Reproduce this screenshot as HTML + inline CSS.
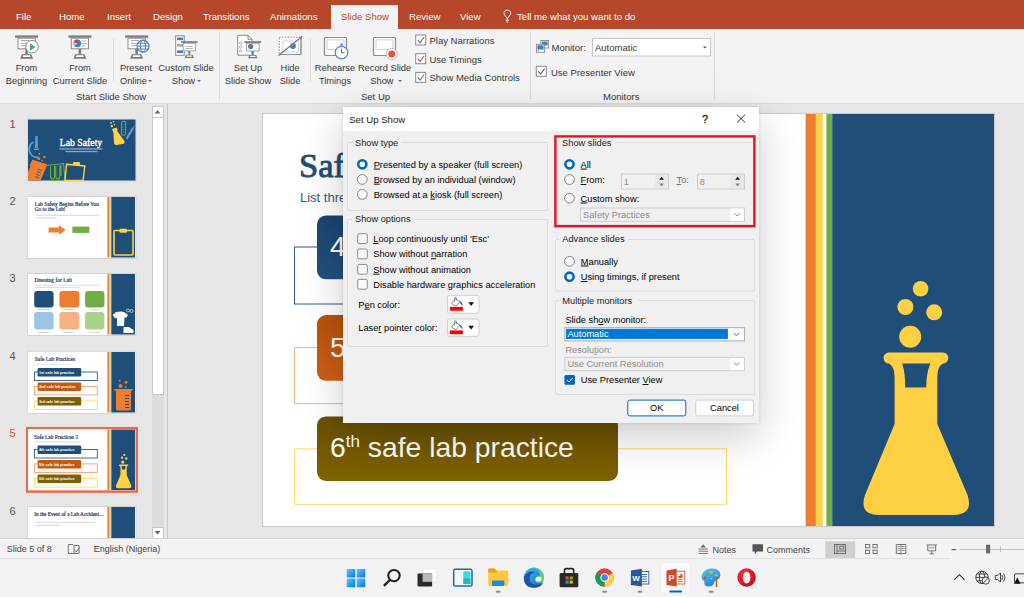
<!DOCTYPE html>
<html><head><meta charset="utf-8">
<style>
*{margin:0;padding:0;box-sizing:border-box}
html,body{width:1024px;height:597px;overflow:hidden}
body{position:relative;background:#E6E6E6;font-family:"Liberation Sans",sans-serif;color:#262626}
.a{position:absolute;white-space:nowrap}
#tabs{left:0;top:0;width:1024px;height:29px;background:#B7472A}
.tab{position:absolute;top:10.7px;font-size:9.6px;color:#fff;line-height:12px}
#ribbon{left:0;top:29px;width:1024px;height:75px;background:#F3F3F3;border-bottom:1px solid #DADADA}
.rl{position:absolute;font-size:9.3px;color:#363636;line-height:13px;text-align:center}
.sep{position:absolute;width:1px;background:#DADADA}
.gl{position:absolute;font-size:9.5px;color:#363636;line-height:12px}
.cb{position:absolute;width:11px;height:11px;border:1px solid #8A8A8A;background:#fff}
</style></head>
<body>
<!-- TABS -->
<div id="tabs" class="a">
  <div class="tab" style="left:16px">File</div>
  <div class="tab" style="left:59px">Home</div>
  <div class="tab" style="left:107px">Insert</div>
  <div class="tab" style="left:153px">Design</div>
  <div class="tab" style="left:203px">Transitions</div>
  <div class="tab" style="left:270px">Animations</div>
  <div class="a" style="left:331px;top:5px;width:67px;height:24px;background:#F3F3F3"></div>
  <div class="tab" style="left:341px;color:#B7472A">Slide Show</div>
  <div class="tab" style="left:409px">Review</div>
  <div class="tab" style="left:460px">View</div>
  <svg class="a" style="left:500px;top:8px" width="16" height="17" viewBox="500 8 16 17"><path d="M507.2,21 V19.2 Q507.2,18 506.2,17 Q503.5,14.8 504,12.6 Q504.6,10.2 507.3,10 Q510,10.2 510.6,12.6 Q511.1,14.8 508.4,17 Q507.4,18 507.4,19.2" fill="none" stroke="#fff" stroke-width="0.9"/><path d="M505.8,20.2 H508.8 M506.3,22 H508.3" stroke="#fff" stroke-width="0.9"/></svg>
  <div class="tab" style="left:517px">Tell me what you want to do</div>
</div>
<!-- RIBBON -->
<div id="ribbon" class="a"></div>
<!-- RIBBON CONTENT -->
<svg class="a" style="left:0;top:0" width="720" height="104" viewBox="0 0 720 104">
 <defs>
  <g id="proj">
   <rect x="0" y="0" width="23" height="2.3" fill="#7A7A7A"/>
   <rect x="2.9" y="2.8" width="17.2" height="10.6" fill="#fff" stroke="#8A8A8A" stroke-width="1"/>
   <rect x="10.2" y="13.5" width="2.6" height="5.5" fill="#7A7A7A"/>
   <path d="M5,23.4 L18,23.4 L16.2,18.8 L6.8,18.8 Z" fill="#7A7A7A"/>
   <path d="M7.5,21.6 L15.5,21.6 L14.8,19.8 L8.2,19.8 Z" fill="#fff"/>
  </g>
 </defs>
 <!-- From Beginning -->
 <use href="#proj" x="15.1" y="35.4"/>
 <rect x="21" y="40" width="8" height="1" fill="#AAA"/><rect x="21" y="42.8" width="8" height="1" fill="#AAA"/><rect x="21" y="45.2" width="5" height="1" fill="#AAA"/>
 <circle cx="32" cy="46.7" r="6.3" fill="#fff" stroke="#8A8A8A" stroke-width="1"/>
 <path d="M30,43.2 L35.6,47 L30,50.8 Z" fill="#5AA17A"/>
 <!-- From Current Slide -->
 <use href="#proj" x="68.4" y="35.4"/>
 <circle cx="77.3" cy="43.3" r="3.9" fill="#3C7FC5"/>
 <path d="M77.3,43.3 L77.3,39.4 A3.9,3.9 0 0 0 73.6,42.2 Z" fill="#D9472B"/>
 <path d="M77.3,43.3 L73.6,42.2 A3.9,3.9 0 0 0 74.6,46 Z" fill="#F4C582"/>
 <rect x="81.6" y="40.5" width="4.5" height="0.9" fill="#AAA"/><rect x="81.6" y="43" width="5.3" height="0.9" fill="#AAA"/><rect x="81.6" y="45.4" width="3.5" height="0.9" fill="#AAA"/>
 <!-- Present Online -->
 <use href="#proj" x="125.1" y="35.4"/>
 <rect x="131" y="40" width="8" height="1" fill="#AAA"/><rect x="131" y="42.8" width="8" height="1" fill="#AAA"/><rect x="131" y="45.2" width="5" height="1" fill="#AAA"/>
 <circle cx="143" cy="46.1" r="6" fill="#fff" stroke="#4A86C8" stroke-width="1.2"/>
 <ellipse cx="143" cy="46.1" rx="2.6" ry="6" fill="none" stroke="#4A86C8" stroke-width="1"/>
 <path d="M137,46.1 H149 M137.8,43.2 H148.2 M137.8,49 H148.2" stroke="#4A86C8" stroke-width="1"/>
 <!-- Custom Slide Show -->
 <rect x="175.7" y="35.8" width="8.5" height="19.5" fill="#fff" stroke="#8A8A8A" stroke-width="1"/>
 <rect x="177" y="37.6" width="6" height="2.6" fill="#3C7FC5"/>
 <rect x="177" y="44" width="6" height="2.6" fill="#A8A8A8"/>
 <rect x="177" y="50.4" width="6" height="2.6" fill="#3C7FC5"/>
 <g transform="translate(181,41.2) scale(0.72)"><use href="#proj"/></g>
 <rect x="185.5" y="46" width="7" height="0.8" fill="#AAA"/><rect x="185.5" y="48" width="7" height="0.8" fill="#AAA"/>
 <!-- separators -->
 <rect x="113" y="38" width="1" height="43" fill="#DADADA"/>
 <rect x="219" y="32.5" width="1" height="67" fill="#DADADA"/>
 <rect x="310" y="38" width="1" height="44" fill="#DADADA"/>
 <rect x="530" y="32.5" width="1" height="67" fill="#DADADA"/>
 <rect x="714" y="32.5" width="1" height="67" fill="#DADADA"/>
 <!-- Set Up Slide Show -->
 <path d="M237.7,35.3 H248 L252,39.3 V55.2 H237.7 Z" fill="#fff" stroke="#8A8A8A" stroke-width="1"/>
 <path d="M248,35.3 V39.3 H252" fill="none" stroke="#8A8A8A" stroke-width="1"/>
 <circle cx="240.6" cy="43" r="1.2" fill="none" stroke="#999" stroke-width="0.7"/><circle cx="240.6" cy="47" r="1.2" fill="none" stroke="#999" stroke-width="0.7"/><circle cx="240.6" cy="51" r="1.2" fill="none" stroke="#999" stroke-width="0.7"/>
 <g transform="translate(244.4,41.2) scale(0.73)"><use href="#proj"/></g>
 <circle cx="250.7" cy="46.6" r="2.6" fill="#3C7FC5"/><path d="M250.7,46.6 V44 A2.6,2.6 0 0 0 248.2,45.9 Z" fill="#D9472B"/>
 <!-- Hide Slide -->
 <rect x="279.3" y="37.3" width="21.7" height="17.2" fill="#fff" stroke="#8A8A8A" stroke-width="1" stroke-dasharray="1.4,1.4"/>
 <path d="M301,37.3 V54.5 H279.3" fill="none" stroke="#8A8A8A" stroke-width="1.2"/>
 <rect x="283" y="41" width="15.5" height="11" fill="none" stroke="#C8C8C8" stroke-width="0.8"/>
 <circle cx="292.9" cy="46" r="3" fill="#3C7FC5"/><path d="M292.9,46 V43 A3,3 0 0 0 290,45.5 Z" fill="#F0A030"/>
 <path d="M278.5,55.5 L302.3,36.2" stroke="#7A7A7A" stroke-width="1.3"/>
 <!-- Rehearse Timings -->
 <rect x="324.5" y="37.5" width="22" height="18" rx="1" fill="#fff" stroke="#8A8A8A" stroke-width="1.2"/>
 <rect x="327" y="39.8" width="17" height="9.8" rx="1" fill="#fff" stroke="#CFCFCF" stroke-width="1"/>
 <rect x="340.3" y="43.5" width="2.4" height="2.2" fill="#777"/>
 <circle cx="341.5" cy="52.6" r="6.3" fill="#fff" stroke="#4A8ADA" stroke-width="1.3"/>
 <path d="M341.5,48.8 V52.8 H344.5" fill="none" stroke="#555" stroke-width="0.9"/>
 <!-- Record Slide Show -->
 <rect x="373.5" y="37.5" width="22" height="18" rx="1" fill="#fff" stroke="#8A8A8A" stroke-width="1.2"/>
 <rect x="376" y="39.8" width="17" height="9.8" rx="1" fill="#fff" stroke="#CFCFCF" stroke-width="1"/>
 <circle cx="391.7" cy="53.9" r="5.6" fill="#fff" stroke="#BDBDBD" stroke-width="1"/>
 <circle cx="391.7" cy="53.9" r="3.5" fill="#E0583A"/>
 <!-- checkboxes -->
 <g fill="#fff" stroke="#8A8A8A" stroke-width="1">
  <rect x="415.7" y="35" width="10" height="10"/>
  <rect x="415.7" y="53.7" width="10" height="10"/>
  <rect x="415.7" y="72.4" width="10" height="10"/>
  <rect x="536.3" y="66.3" width="10" height="10"/>
 </g>
 <g fill="none" stroke="#6A6A6A" stroke-width="1.1">
  <path d="M417.8,40 L420,42.8 L424,37.3"/>
  <path d="M417.8,58.7 L420,61.5 L424,56"/>
  <path d="M417.8,77.4 L420,80.2 L424,74.7"/>
  <path d="M538.4,71.3 L540.6,74.1 L544.6,68.6"/>
 </g>
 <!-- monitor icon -->
 <rect x="540.8" y="40.5" width="7.8" height="7.5" fill="#fff" stroke="#8A8A8A" stroke-width="0.9"/>
 <rect x="541.8" y="41.5" width="5.8" height="4" fill="#3C7FC5"/>
 <rect x="536.4" y="44.3" width="8.2" height="8" fill="#fff" stroke="#8A8A8A" stroke-width="0.9"/>
 <rect x="537.4" y="45.3" width="6.2" height="4.2" fill="#3C7FC5"/>
 <rect x="537.6" y="50.3" width="1.5" height="0.8" fill="#E05A3A"/>
 <!-- dropdown -->
 <rect x="592.5" y="38.5" width="118" height="17.5" fill="#fff" stroke="#C6C6C6" stroke-width="1"/>
 <path d="M702.8,46.5 L706.8,46.5 L704.8,48.6 Z" fill="#555"/>
 <!-- dropdown arrows under labels -->
 <path d="M148,80 L152,80 L150,82 Z" fill="#666"/>
 <path d="M197,80 L201,80 L199,82 Z" fill="#666"/>
 <path d="M398,80 L402,80 L400,82 Z" fill="#666"/>
</svg>
<div class="rl" style="left:0;width:53px;top:62px">From<br>Beginning</div>
<div class="rl" style="left:50px;width:60px;top:62px">From<br>Current Slide</div>
<div class="rl" style="left:116px;width:40px;top:62px">Present<br>Online&nbsp;&nbsp;</div>
<div class="rl" style="left:156px;width:60px;top:62px">Custom Slide<br>Show&nbsp;&nbsp;</div>
<div class="gl" style="left:76px;top:91px">Start Slide Show</div>
<div class="rl" style="left:222px;width:52px;top:62px">Set Up<br>Slide Show</div>
<div class="rl" style="left:274px;width:32px;top:62px">Hide<br>Slide</div>
<div class="rl" style="left:313px;width:44px;top:62px">Rehearse<br>Timings</div>
<div class="rl" style="left:357px;width:55px;top:62px">Record Slide<br>Show&nbsp;&nbsp;</div>
<div class="gl" style="left:361px;top:91px">Set Up</div>
<div class="gl" style="left:429.5px;top:35px">Play Narrations</div>
<div class="gl" style="left:429.5px;top:53.7px">Use Timings</div>
<div class="gl" style="left:429.5px;top:72.4px">Show Media Controls</div>
<div class="gl" style="left:551.5px;top:42px">Monitor:</div>
<div class="gl" style="left:595px;top:42px">Automatic</div>
<div class="gl" style="left:551px;top:66.8px">Use Presenter View</div>
<div class="gl" style="left:603px;top:91px">Monitors</div>


<!-- THUMBNAIL PANEL -->
<div class="a" style="left:167px;top:104px;width:1px;height:434px;background:#C8C8C8"></div>
<div class="a" style="left:152px;top:106px;width:11.5px;height:432px;background:#DCDCDC"></div>
<div class="a" style="left:151.5px;top:105.5px;width:12px;height:12px;background:#fff;border:1px solid #C6C6C6"></div>
<div class="a" style="left:151.5px;top:117px;width:12px;height:278px;background:#fff;border:1px solid #C6C6C6"></div>
<div class="a" style="left:151.5px;top:527px;width:12px;height:12px;background:#fff;border:1px solid #C6C6C6"></div>
<svg class="a" style="left:0;top:0" width="170" height="540" viewBox="0 0 170 540">
 <path d="M154.5,113.5 L160.5,113.5 L157.5,110 Z" fill="#666"/>
 <path d="M154.5,531 L160.5,531 L157.5,534.5 Z" fill="#666"/>
 <g font-family="Liberation Sans" font-size="11" fill="#555">
  <text x="9.5" y="128">1</text><text x="9.5" y="205">2</text><text x="9.5" y="282">3</text>
  <text x="9.5" y="359.5">4</text><text x="9.5" y="437" fill="#D35230">5</text><text x="9.5" y="514.5">6</text>
 </g>
 <defs>
  <g id="rp">
   <rect x="0" y="0" width="107" height="60.5" fill="#fff"/>
   <rect x="79.4" y="0" width="1.6" height="60.5" fill="#ED7D31"/>
   <rect x="81" y="0" width="1.1" height="60.5" fill="#FFD24A"/>
   <rect x="82.6" y="0" width="0.8" height="60.5" fill="#70AD47"/>
   <rect x="83.4" y="0" width="23.6" height="60.5" fill="#1F4E79"/>
  </g>
  <g id="rows">
   <rect x="6.5" y="20" width="62.8" height="8.5" fill="none" stroke="#2E5C8A" stroke-width="0.9"/>
   <rect x="9.6" y="16" width="43.6" height="8.4" rx="1.2" fill="#1F4E79"/>
   <rect x="6.5" y="34.4" width="62.8" height="8.5" fill="none" stroke="#F0A070" stroke-width="0.9"/>
   <rect x="9.6" y="30.5" width="43.6" height="8.5" rx="1.2" fill="#C55A11"/>
   <rect x="6.5" y="49" width="62.8" height="8.6" fill="none" stroke="#FFD966" stroke-width="0.9"/>
   <rect x="9.6" y="45.1" width="43.6" height="8.5" rx="1.2" fill="#7F6000"/>
  </g>
 </defs>
 <!-- thumb 1 -->
 <rect x="28" y="119" width="108" height="62" fill="#fff" stroke="#D2D2D2" stroke-width="1"/>
 <g transform="translate(28,119.5)">
  <rect x="0" y="0" width="107.5" height="61" fill="#1F4E79"/>
  <text x="53" y="26.6" font-family="Liberation Serif" font-size="9.75" fill="#fff" stroke="#fff" stroke-width="0.35" text-anchor="middle">Lab Safety</text>
  <rect x="31.5" y="29" width="43" height="0.9" fill="#C5D3E8"/>
  <rect x="37.5" y="31.4" width="32" height="1.3" fill="#A9BEDD" opacity="0.8"/>
  <!-- microscope -->
  <path d="M7.2,16.5 L9.6,16.5 L10,28.5 L6.8,28.5 Z" fill="#5B9BD5"/>
  <path d="M6,29 H11 V30.5 H6 Z" fill="#5B9BD5"/>
  <path d="M5.5,22.5 C1,24.5 0,31 3,35 C5,37.5 8,38 10.5,38" fill="none" stroke="#5B9BD5" stroke-width="1.8"/>
  <!-- orange beaker -->
  <path d="M4.5,40 L19.3,45 L12.6,61 L0,61 L0,52.5 L2.5,47 L1.5,46 Z" fill="#ED7D31"/>
  <g stroke="#1F4E79" stroke-width="0.8"><path d="M9.5,49.5 L13.5,51 M8.7,52 L12.7,53.5 M7.9,54.5 L11.9,56 M7.1,57 L11.1,58.5"/></g>
  <circle cx="10.8" cy="39" r="1.5" fill="#ED7D31"/><circle cx="16.3" cy="37.5" r="1.2" fill="#ED7D31"/><circle cx="11.3" cy="34.3" r="0.9" fill="#ED7D31"/><circle cx="14.1" cy="41" r="0.8" fill="#ED7D31"/>
  <!-- test tubes -->
  <g fill="none" stroke="#70AD47" stroke-width="1.1">
   <path d="M19,46 L35.5,44 L37,60.5 L21,61"/>
   <path d="M22.5,47 V57 Q22.5,59.5 24.5,59.5 Q26.5,59.5 26.5,57 V46.5 M27.8,46.2 V57 Q27.8,59.3 29.8,59.3 Q31.8,59.3 31.8,57 V45.8 M33,45.7 V56.5"/>
  </g>
  <!-- clipboard -->
  <path d="M38.5,44.8 L56.8,46.5 L55,61 L37,61 Z" fill="none" stroke="#FFD24A" stroke-width="1.4"/>
  <rect x="45" y="42.5" width="7" height="3.2" rx="1.2" fill="#FFD24A"/>
  <!-- flask top right -->
  <path d="M84,9.5 L89,8 L89.5,12 L96.5,21.5 Q97,24 94.5,24.5 L88.5,25.5 Q86,25.5 86,23 L85.5,13.5 Z" fill="#FFD24A"/>
  <circle cx="83" cy="3.5" r="0.9" fill="#FFD24A"/><circle cx="85.5" cy="2.2" r="0.8" fill="#FFD24A"/><circle cx="83.8" cy="6.6" r="1.2" fill="#FFD24A"/><circle cx="86.5" cy="5.2" r="0.7" fill="#FFD24A"/>
  <rect x="93.6" y="2" width="4" height="13.6" rx="0.5" fill="none" stroke="#70AD47" stroke-width="1"/>
  <g stroke="#70AD47" stroke-width="0.5"><path d="M94.4,5 H96 M94.4,7.5 H96 M94.4,10 H96 M94.4,12.5 H96"/></g>
  <path d="M98.5,19.5 L105,8.5" stroke="#5B9BD5" stroke-width="2.2"/>
  <path d="M105,8.5 L106.5,6" stroke="#5B9BD5" stroke-width="1"/>
 </g>
 <!-- thumb 2 -->
 <rect x="28" y="196.5" width="108" height="62" fill="#fff" stroke="#D2D2D2" stroke-width="1"/>
 <g transform="translate(28,197)">
  <use href="#rp"/>
  <text x="6.8" y="8.6" font-family="Liberation Serif" font-size="5.25" fill="#1F3864" stroke="#1F3864" stroke-width="0.2">Lab Safety Begins Before You</text>
  <text x="6.8" y="14.1" font-family="Liberation Serif" font-size="5.25" fill="#1F3864" stroke="#1F3864" stroke-width="0.2">Go to the Lab!</text>
  <rect x="7.5" y="17.8" width="64" height="0.7" fill="#BCC4D0"/><rect x="8.5" y="20.6" width="21" height="0.7" fill="#BCC4D0"/>
  <path d="M20.6,30.5 H31 V28.2 L37.7,33 L31,37.7 V35.4 H20.6 Z" fill="#ED7D31"/>
  <rect x="44.4" y="29.6" width="16.9" height="6.3" fill="#70AD47"/>
  <rect x="86" y="33.5" width="19" height="24.5" rx="1" fill="none" stroke="#FFD24A" stroke-width="1.6"/>
  <rect x="91.5" y="31.8" width="7.5" height="4" rx="1.2" fill="#FFD24A"/>
 </g>
 <!-- thumb 3 -->
 <rect x="28" y="273.5" width="108" height="62" fill="#fff" stroke="#D2D2D2" stroke-width="1"/>
 <g transform="translate(28,274)">
  <use href="#rp"/>
  <text x="6.5" y="7.8" font-family="Liberation Serif" font-size="5.5" fill="#1F3864" stroke="#1F3864" stroke-width="0.2">Dressing for Lab</text>
  <rect x="6.5" y="10.8" width="66" height="0.7" fill="#CCD0D8"/><rect x="6.5" y="13" width="45" height="0.7" fill="#CCD0D8"/>
  <rect x="6.2" y="16.9" width="19.4" height="16.6" rx="3" fill="#1F4E79"/>
  <rect x="31.4" y="16.9" width="19.9" height="16.6" rx="3" fill="#ED7D31"/>
  <rect x="57.1" y="16.9" width="19.3" height="16.6" rx="3" fill="#70AD47"/>
  <rect x="6.2" y="38.1" width="19.4" height="17.5" rx="3" fill="#9DC3E6"/>
  <rect x="31.4" y="38.1" width="19.9" height="17.5" rx="3" fill="#F4B183"/>
  <rect x="57.1" y="38.1" width="19.3" height="17.5" rx="3" fill="#A9D18E"/>
  <g fill="#BBB"><rect x="10" y="35" width="11" height="0.6"/><rect x="35" y="35" width="11" height="0.6"/><rect x="61" y="35.6" width="11" height="0.6"/><rect x="10" y="58.2" width="11" height="0.6"/><rect x="35" y="58.2" width="11" height="0.6"/><rect x="61" y="58.2" width="11" height="0.6"/></g>
  <path d="M88,38 L93,37.4 L96,38 L100,41 L98,44 L96.5,43 L96,52 L89,52 L89,43.5 L87,44.5 L84.7,41 Z" fill="#fff"/>
  <path d="M95.5,53 L101,53 L105.5,56 L105.5,59 L95.5,59 Z" fill="#fff"/>
  <circle cx="100" cy="36.5" r="1.5" fill="none" stroke="#fff" stroke-width="0.6"/><circle cx="103.5" cy="37" r="1.5" fill="none" stroke="#fff" stroke-width="0.6"/>
 </g>
 <!-- thumb 4 -->
 <rect x="28" y="351.2" width="108" height="62" fill="#fff" stroke="#D2D2D2" stroke-width="1"/>
 <g transform="translate(28,352)">
  <use href="#rp"/>
  <text x="6.8" y="9.2" font-family="Liberation Serif" font-size="5.42" fill="#1F3864" stroke="#1F3864" stroke-width="0.2">Safe Lab Practices</text>
  <rect x="6.8" y="12.4" width="36" height="0.6" fill="#D8D8D8"/>
  <use href="#rows"/>
  <g font-family="Liberation Sans" font-size="3.7" font-weight="bold" fill="#fff"><text x="11" y="21.5">1st safe lab practice</text><text x="11" y="36">2nd safe lab practice</text><text x="11" y="50.6">3rd safe lab practice</text></g>
  <path d="M86,37 L105,37 L104,39 L103,39 L103,57 Q103,58.4 101.6,58.4 L89.4,58.4 Q88,58.4 88,57 L88,39 L86.8,39 Z" fill="#ED7D31"/>
  <g fill="#1F4E79"><rect x="97" y="43" width="4" height="1"/><rect x="97" y="46" width="4" height="1"/><rect x="97" y="49" width="4" height="1"/><rect x="97" y="52" width="4" height="1"/><rect x="97" y="55" width="4" height="1"/></g>
  <circle cx="91.7" cy="28.7" r="1" fill="#ED7D31"/><circle cx="98" cy="30.4" r="1.4" fill="#ED7D31"/><circle cx="92.5" cy="34" r="2" fill="#ED7D31"/><circle cx="97.7" cy="35.1" r="0.9" fill="#ED7D31"/>
 </g>
 <!-- thumb 5 selected -->
 <rect x="27.2" y="428.2" width="109.6" height="63.4" fill="#fff" stroke="#EA6B4B" stroke-width="2.5"/>
 <g transform="translate(28,429.5)">
  <use href="#rp"/>
  <text x="6.1" y="9.2" font-family="Liberation Serif" font-size="5.4" fill="#1F3864" stroke="#1F3864" stroke-width="0.2">Safe Lab Practices 2</text>
  <rect x="6.8" y="12.2" width="45" height="0.5" fill="#C9A9A0"/>
  <use href="#rows"/>
  <g font-family="Liberation Sans" font-size="3.7" font-weight="bold" fill="#fff"><text x="11" y="21.5">4th safe lab practice</text><text x="11" y="36">5th safe lab practice</text><text x="11" y="50.6">6th safe lab practice</text></g>
  <g transform="scale(0.1464)"><use href="#flask"/></g>
 </g>
 <!-- thumb 6 -->
 <rect x="28" y="506.5" width="108" height="40" fill="#fff" stroke="#D2D2D2" stroke-width="1"/>
 <g transform="translate(28,507)">
  <use href="#rp"/>
  <text x="6.2" y="9.2" font-family="Liberation Serif" font-size="5.3" fill="#1F3864" stroke="#1F3864" stroke-width="0.2">In the Event of a Lab Accident…</text>
  <rect x="7.5" y="14.8" width="60" height="0.7" fill="#BCC4D0"/><rect x="8.5" y="17.8" width="24" height="0.7" fill="#BCC4D0"/>
 </g>
 <rect x="0" y="538" width="170" height="2" fill="#E6E6E6"/>
</svg>

<!-- SLIDE CANVAS -->
<div class="a" style="left:262px;top:113px;width:733px;height:414px;background:#CACACA"></div>
<svg class="a" style="left:263px;top:114px" width="731" height="412" viewBox="0 0 731 412">
 <defs>
  <linearGradient id="gN" x1="0" y1="0" x2="0" y2="1"><stop offset="0" stop-color="#1B4470"/><stop offset="1" stop-color="#22527F"/></linearGradient>
  <linearGradient id="gO" x1="0" y1="0" x2="0" y2="1"><stop offset="0" stop-color="#B8510C"/><stop offset="1" stop-color="#CC6016"/></linearGradient>
  <linearGradient id="gB" x1="0" y1="0" x2="0" y2="1"><stop offset="0" stop-color="#685000"/><stop offset="1" stop-color="#806200"/></linearGradient>
  <g id="flask">
   <circle cx="657.6" cy="174.8" r="7.8" fill="#FFCF44"/>
   <circle cx="642.4" cy="193" r="8" fill="#FFCF44"/>
   <circle cx="671.2" cy="198.3" r="8" fill="#FFCF44"/>
   <circle cx="647.2" cy="222.7" r="11" fill="#FFCF44"/>
   <path d="M626,238.5 H679.8 A5.5,5.5 0 0 1 679.8,249.5 Q674.3,253 674.3,263 V310 L704.5,381 Q711,401 690,401 H616 Q595.5,401 602,381 L631.6,310 V263 Q631.6,253 626,249.5 A5.5,5.5 0 0 1 626,238.5 Z M639.2,249.4 H667.4 Q663,260 663.3,273.4 H642.2 Q642.5,260 639.2,249.4 Z" fill="#FFCF44" fill-rule="evenodd"/>
  </g>
 </defs>
 <rect x="0" y="0" width="731" height="412" fill="#fff"/>
 <text x="36" y="63.3" font-family="Liberation Serif" font-size="34.5" fill="#1F4E79" stroke="#1F4E79" stroke-width="0.9">Safe Lab Practices 2</text>
 <text x="37" y="87.8" font-family="Liberation Sans" font-size="13" fill="#2E5C8A">List three more safe lab practices</text>
 <rect x="31.5" y="133" width="432" height="57" fill="none" stroke="#2E5C8A" stroke-width="1"/>
 <rect x="54" y="101.5" width="301" height="63.8" rx="9" fill="url(#gN)"/>
 <rect x="31.5" y="233.6" width="432" height="56" fill="none" stroke="#F4B183" stroke-width="1"/>
 <rect x="54" y="201" width="301" height="65.8" rx="9" fill="url(#gO)"/>
 <rect x="31.5" y="334.8" width="432" height="55.5" fill="none" stroke="#FFD966" stroke-width="1"/>
 <rect x="54" y="302.4" width="301" height="64.5" rx="9" fill="url(#gB)"/>
 <g font-family="Liberation Sans" fill="#fff">
  <text x="67" y="142" font-size="28.3">4<tspan dy="-10" font-size="17">th</tspan><tspan dy="10"> safe lab practice</tspan></text>
  <text x="67" y="243" font-size="28.3">5<tspan dy="-10" font-size="17">th</tspan><tspan dy="10"> safe lab practice</tspan></text>
  <text x="67" y="343.4" font-size="28.3">6<tspan dy="-10" font-size="17">th</tspan><tspan dy="10"> safe lab practice</tspan></text>
 </g>
 <rect x="542.6" y="0" width="10.3" height="412" fill="#ED7D31"/>
 <rect x="552.9" y="0" width="6.8" height="412" fill="#FFD24A"/>
 <rect x="563.4" y="0" width="5.8" height="412" fill="#70AD47"/>
 <rect x="569.2" y="0" width="161.8" height="412" fill="#1F4E79"/>
 <use href="#flask"/>
</svg>


<!-- STATUS BAR -->
<div class="a" style="left:0;top:538px;width:1024px;height:1px;background:#D4D4D4"></div>
<div class="a" style="left:0;top:539px;width:1024px;height:19px;background:#F3F3F3"></div>
<!-- TASKBAR -->
<div class="a" style="left:0;top:558px;width:1024px;height:39px;background:#F2F2F2"></div>
<div class="a" style="left:0;top:558px;width:950px;height:1px;background:#E0E0E0"></div>
<svg class="a" style="left:0;top:538px" width="1024" height="59" viewBox="0 538 1024 59" font-family="Liberation Sans" font-size="9" fill="#444">
 <text x="6.8" y="552.4">Slide 5 of 8</text>
 <path d="M68.3,544.5 H73 L74,545.5 V553.5 H68.3 Z M74,545.5 H79 V553.5 H74" fill="none" stroke="#666" stroke-width="0.9"/>
 <path d="M74.5,550 L76.2,552 L79.5,547.5" fill="none" stroke="#666" stroke-width="0.9"/>
 <text x="93.8" y="552.4">English (Nigeria)</text>
 <!-- notes icon -->
 <path d="M700.5,547.5 L703.2,544.3 L705.9,547.5 Z" fill="#666"/>
 <g fill="#777"><rect x="698.6" y="548.5" width="9.3" height="1"/><rect x="698.6" y="550.7" width="9.3" height="1"/><rect x="698.6" y="552.9" width="9.3" height="1"/></g>
 <text x="712.4" y="552.9">Notes</text>
 <path d="M752.5,544.3 H763 V551.5 H757 L754.8,554.3 V551.5 H752.5 Z" fill="#555"/>
 <text x="766.4" y="552.9">Comments</text>
 <rect x="825.3" y="541.3" width="29.9" height="16.6" fill="#CFCFCF"/>
 <g fill="none" stroke="#666" stroke-width="0.9">
  <rect x="834.5" y="544.5" width="11" height="9"/><path d="M837,544.5 V553.5 M837,551 H845.5"/><rect x="839.8" y="546.2" width="4" height="2.8"/>
  <rect x="865.5" y="544.5" width="4.2" height="3.3"/><rect x="873" y="544.5" width="4.2" height="3.3"/><rect x="865.5" y="550.2" width="4.2" height="3.3"/><rect x="873" y="550.2" width="4.2" height="3.3"/>
  <path d="M896.3,544.5 H905.8 V553.5 H896.3 Z M901,544.5 V554.5"/>
  <path d="M897.5,546.5 H900 M897.5,548.5 H900 M897.5,550.5 H900 M902,546.5 H904.5 M902,548.5 H904.5 M902,550.5 H904.5" stroke-width="0.7"/>
  <path d="M926.5,545 H937 M927.8,545 V550.8 H935.7 V545 M931.75,550.8 V553.6 M929.5,553.8 H934"/>
 </g>
 <path d="M929,547.8 H934.8" stroke="#777" stroke-width="0.8"/>
 <rect x="951.6" y="549" width="4.6" height="1.2" fill="#666"/>
 <rect x="959.6" y="549.2" width="64.4" height="0.8" fill="#B0B0B0"/>
 <rect x="1000" y="546.5" width="0.8" height="5.5" fill="#B0B0B0"/>
 <rect x="986" y="544.7" width="4.2" height="8.7" fill="#6A6A6A"/>
 <!-- taskbar icons -->
 <defs>
  <linearGradient id="wl" x1="0" y1="0" x2="1" y2="1"><stop offset="0" stop-color="#5DCBFB"/><stop offset="1" stop-color="#0A74D8"/></linearGradient>
  <linearGradient id="ed" x1="0" y1="0" x2="1" y2="1"><stop offset="0" stop-color="#3BC2E6"/><stop offset="0.55" stop-color="#2B8FD9"/><stop offset="1" stop-color="#1C5BB5"/></linearGradient>
  <linearGradient id="pl" x1="0" y1="0" x2="0.6" y2="1"><stop offset="0" stop-color="#4FD0F5"/><stop offset="1" stop-color="#1E7FE0"/></linearGradient>
  <radialGradient id="op" cx="0.4" cy="0.35" r="0.7"><stop offset="0" stop-color="#FF3340"/><stop offset="1" stop-color="#C10A18"/></radialGradient>
 </defs>
 <g fill="url(#wl)">
  <rect x="346.7" y="568.9" width="8.6" height="8.6" rx="0.8"/><rect x="356.7" y="568.9" width="8.6" height="8.6" rx="0.8"/>
  <rect x="346.7" y="578.6" width="8.6" height="8.6" rx="0.8"/><rect x="356.7" y="578.6" width="8.6" height="8.6" rx="0.8"/>
 </g>
 <circle cx="394" cy="575.6" r="5.7" fill="none" stroke="#1E1E1E" stroke-width="2"/>
 <path d="M389.8,580 L384.6,585.2" stroke="#1E1E1E" stroke-width="2.4" stroke-linecap="round"/>
 <rect x="422.6" y="568.6" width="14.2" height="13.4" rx="1.2" fill="#FBFBFB" stroke="#DADADA" stroke-width="0.5"/>
 <rect x="417.5" y="573.6" width="14.6" height="13" rx="1" fill="#2A2A2A"/>
 <rect x="422.6" y="573.6" width="9.5" height="8.2" fill="#B9B9B9"/>
 <rect x="453.7" y="569.3" width="18.3" height="16.7" rx="1.6" fill="#fff" stroke="#0F6CBD" stroke-width="1.5"/>
 <rect x="455.8" y="571.2" width="6" height="12.9" rx="0.6" fill="#F8F8F8" stroke="#DDD" stroke-width="0.4"/>
 <rect x="463.3" y="571.2" width="7.2" height="12.9" rx="0.6" fill="#3DD6E6"/>
 <rect x="463.3" y="578.5" width="7.2" height="5.6" fill="#2BB3C2"/>
 <path d="M488.2,570 Q488.2,568.6 489.6,568.6 H494.5 L496.5,570.6 H506.8 Q508.2,570.6 508.2,572 V584.6 Q508.2,585.9 506.8,585.9 H489.6 Q488.2,585.9 488.2,584.6 Z" fill="#FFC83D"/>
 <path d="M488.2,570 Q488.2,568.6 489.6,568.6 H494.5 L496.5,570.6 V572.4 H488.2 Z" fill="#E3A21A"/>
 <rect x="492" y="580.5" width="12.3" height="5.4" rx="1" fill="#1E88E5"/>
 <rect x="495.8" y="590.8" width="4.7" height="1.9" rx="0.9" fill="#8A8A8A"/>
 <circle cx="533.8" cy="577.6" r="10" fill="url(#ed)"/>
 <path d="M533.8,567.6 A10,10 0 0 1 543.8,577.8 Q543.4,582.6 539.2,583 Q535,583.2 535.2,579.5 Q535.6,575.6 540.5,575.2 Q538.5,569.5 533.8,567.6 Z" fill="#5BCF7E"/>
 <path d="M523.9,577 Q523.5,587.8 534,587.7 Q540.8,587.6 543.4,582.4 Q539.5,585.6 534.6,584.6 Q529.6,583.4 529.6,578.2 Q529.8,573.2 535.2,572.2 Q528.5,569.8 523.9,577 Z" fill="#1A56A8"/>
 <ellipse cx="538.6" cy="579.2" rx="3" ry="2.4" fill="#EEF3F3"/>
 <rect x="564.5" y="568.6" width="9.2" height="6" rx="1.8" fill="none" stroke="#222" stroke-width="1.6"/>
 <rect x="559.6" y="573" width="18.7" height="14.3" rx="1.4" fill="#2A2A2A"/>
 <rect x="565.6" y="576.5" width="3.1" height="3" fill="#F25022"/><rect x="569.7" y="576.5" width="3.1" height="3" fill="#7FBA00"/>
 <rect x="565.6" y="580.6" width="3.1" height="3" fill="#00A4EF"/><rect x="569.7" y="580.6" width="3.1" height="3" fill="#FFB900"/>
 <circle cx="604.6" cy="577.5" r="9.2" fill="#DB4437"/>
 <path d="M604.6,577.5 L596.6,582.1 A9.2,9.2 0 0 0 604.6,586.7 Z" fill="#0F9D58"/>
 <path d="M604.6,577.5 L596.6,582.1 A9.2,9.2 0 0 1 596.8,572.6 Z" fill="#0F9D58"/>
 <path d="M604.6,577.5 L612.6,572.9 A9.2,9.2 0 0 1 604.6,586.7 Z" fill="#FFCD40"/>
 <circle cx="604.6" cy="577.5" r="4.3" fill="#fff"/>
 <circle cx="604.6" cy="577.5" r="3.3" fill="#4285F4"/>
 <rect x="602.3" y="590.8" width="4.8" height="1.9" rx="0.9" fill="#8A8A8A"/>
 <rect x="638.5" y="571.5" width="10.3" height="12.5" fill="#fff" stroke="#2B5AA8" stroke-width="0.9"/>
 <g fill="#2B5AA8"><rect x="642" y="574" width="5" height="0.9"/><rect x="642" y="576.3" width="5" height="0.9"/><rect x="642" y="578.6" width="5" height="0.9"/><rect x="642" y="580.9" width="5" height="0.9"/></g>
 <path d="M630.9,570.5 L641.9,568.8 V586.6 L630.9,584.9 Z" fill="#2B579A"/>
 <text x="632.2" y="581" font-size="8" font-weight="bold" fill="#fff">W</text>
 <rect x="637.6" y="590.8" width="4.7" height="1.9" rx="0.9" fill="#8A8A8A"/>
 <rect x="660.3" y="562.3" width="30.4" height="30.8" rx="3.5" fill="#FAFAFA" stroke="#E4E4E4" stroke-width="0.6"/>
 <rect x="675.5" y="571.2" width="9.3" height="12.8" fill="#fff" stroke="#D35230" stroke-width="0.9"/>
 <path d="M678,576 A2.4,2.4 0 1 0 680.4,573.6 V576 Z" fill="#D35230"/>
 <g fill="#D35230"><rect x="678" y="579" width="5" height="0.8"/><rect x="678" y="581" width="5" height="0.8"/></g>
 <path d="M666.5,570.5 L676.7,568.8 V586.6 L666.5,584.9 Z" fill="#D04A2A"/>
 <text x="668.4" y="581.3" font-size="9" font-weight="bold" fill="#fff">P</text>
 <rect x="669.2" y="590.4" width="13" height="2.1" rx="1" fill="#0067C0"/>
 <path d="M711,568.6 C717,568 721,571 720.3,576 C719.7,580 715.5,579.2 714.5,582 C713.5,586 709.5,587.5 706,586 C703,584.5 705.5,581.5 703.5,580.5 C701,579.5 701.3,575 703.2,572.5 C705,570 708,568.8 711,568.6 Z" fill="url(#pl)"/>
 <circle cx="705" cy="578" r="1.4" fill="#E0442E"/><circle cx="707.5" cy="574.2" r="1.4" fill="#5BB14A"/><circle cx="711.3" cy="572.3" r="1.4" fill="#F5B82E"/>
 <circle cx="711.3" cy="578.5" r="0.6" fill="#fff"/>
 <path d="M716.5,575 V587" stroke="#B2651F" stroke-width="1.6"/>
 <path d="M715.2,574.5 L717.8,574.5 L717.2,576.5 L715.8,576.5 Z" fill="#E8C49A"/>
 <rect x="708.7" y="590.8" width="4.8" height="1.9" rx="0.9" fill="#8A8A8A"/>
 <path fill-rule="evenodd" d="M746.6,568.3 A9.2,9.2 0 1 1 746.6,586.7 A9.2,9.2 0 1 1 746.6,568.3 Z M746.6,571.6 A3.8,6 0 1 0 746.6,583.6 A3.8,6 0 1 0 746.6,571.6 Z" fill="url(#op)"/>
 <!-- tray -->
 <path d="M954.4,579.6 L959.4,574.7 L964.4,579.6" fill="none" stroke="#222" stroke-width="1.1"/>
 <g fill="none" stroke="#333" stroke-width="0.9">
  <circle cx="982" cy="577.4" r="6.2"/>
  <ellipse cx="982" cy="577.4" rx="2.6" ry="6.2"/>
  <path d="M975.8,577.4 H988.2 M976.8,574 H987.2 M976.8,580.8 H987.2"/>
 </g>
 <circle cx="985.8" cy="580.6" r="3.6" fill="#F2F2F2" stroke="#333" stroke-width="0.9"/>
 <path d="M983.6,582.8 L988,578.4" stroke="#333" stroke-width="0.9"/>
 <path d="M995.3,575.5 H997.5 L1000.5,573 V582 L997.5,579.5 H995.3 Z" fill="none" stroke="#333" stroke-width="0.9"/>
 <path d="M1002,575 Q1003.3,577.5 1002,580 M1003.8,573.5 Q1006,577.5 1003.8,581.5" fill="none" stroke="#333" stroke-width="0.9"/>
 <rect x="1014.5" y="573.8" width="12" height="9" rx="1.2" fill="none" stroke="#333" stroke-width="0.9"/>
 <path d="M1014,583.7 L1017.3,577.5 L1020.5,583.7 Z" fill="#111"/>
</svg>

<!-- DIALOG -->
<div class="a" style="left:343px;top:107px;width:416px;height:315.5px;background:#F0F0F0;box-shadow:0 14px 40px rgba(0,0,0,0.20), 0 0 3px rgba(0,0,0,0.12)"></div>
<svg class="a" style="left:343px;top:107px" width="416" height="315" viewBox="343 107 416 315" font-family="Liberation Sans" font-size="9.25" fill="#000">
 <rect x="343" y="107" width="416" height="24" fill="#fff"/>
 <text x="349.2" y="122.6" font-size="9.6" fill="#1A1A1A">Set Up Show</text>
 <text x="702" y="122.6" font-size="11" fill="#222" stroke="#222" stroke-width="0.3">?</text>
 <path d="M737,114.7 L745,122.5 M745,114.7 L737,122.5" stroke="#333" stroke-width="1"/>
 <!-- groupboxes -->
 <g fill="none" stroke="#DCDCDC" stroke-width="1">
  <rect x="347.5" y="142.5" width="200" height="68" rx="1"/>
  <rect x="347.5" y="219.5" width="200" height="127" rx="1"/>
  <rect x="555.5" y="142.5" width="199" height="82" rx="1"/>
  <rect x="555.5" y="239.5" width="199" height="51.5" rx="1"/>
  <rect x="555.5" y="300.5" width="199" height="94" rx="1"/>
 </g>
 <g fill="#F0F0F0">
  <rect x="353" y="138" width="48" height="8"/>
  <rect x="353" y="215" width="61" height="8"/>
  <rect x="559" y="138" width="56" height="8"/>
  <rect x="559" y="235" width="69" height="8"/>
  <rect x="559" y="296" width="79" height="8"/>
 </g>
 <g fill="#1A1A1A">
  <text x="355" y="145.7">Show type</text>
  <text x="355" y="222.2">Show options</text>
  <text x="562.1" y="145.6">Show slides</text>
  <text x="562.3" y="242.4">Advance slides</text>
  <text x="562.3" y="303.8">Multiple monitors</text>
 </g>
 <!-- radios -->
 <g fill="#F7F7F7" stroke="#878787" stroke-width="1">
  <circle cx="362.3" cy="179.4" r="4.9"/>
  <circle cx="362.3" cy="194.4" r="4.9"/>
  <circle cx="569.5" cy="179.6" r="4.9"/>
  <circle cx="569.5" cy="198.2" r="4.9"/>
  <circle cx="569.5" cy="261.3" r="4.9"/>
 </g>
 <g fill="#fff" stroke="#0067C0" stroke-width="2.6">
  <circle cx="362.3" cy="164.3" r="4.1"/>
  <circle cx="569.5" cy="164.3" r="4.1"/>
  <circle cx="569.5" cy="276.7" r="4.1"/>
 </g>
 <g>
  <text x="373.7" y="167.6"><tspan text-decoration="underline">P</tspan>resented by a speaker (full screen)</text>
  <text x="373.7" y="182.7"><tspan text-decoration="underline">B</tspan>rowsed by an individual (window)</text>
  <text x="373.7" y="197.7">Browsed at a <tspan text-decoration="underline">k</tspan>iosk (full screen)</text>
 </g>
 <!-- checkboxes -->
 <g fill="#F9F9F9" stroke="#8A8A8A" stroke-width="1">
  <rect x="357.7" y="233.7" width="9.6" height="9.8" rx="1.5"/>
  <rect x="357.7" y="249" width="9.6" height="9.8" rx="1.5"/>
  <rect x="357.7" y="264.4" width="9.6" height="9.8" rx="1.5"/>
  <rect x="357.7" y="279.4" width="9.6" height="9.8" rx="1.5"/>
 </g>
 <g>
  <text x="373.3" y="242"><tspan text-decoration="underline">L</tspan>oop continuously until 'Esc'</text>
  <text x="373.3" y="257.3">Show without <tspan text-decoration="underline">n</tspan>arration</text>
  <text x="373.3" y="272.7"><tspan text-decoration="underline">S</tspan>how without animation</text>
  <text x="373.3" y="287.7">Disable hardware <tspan text-decoration="underline">g</tspan>raphics acceleration</text>
  <text x="358.3" y="307.6">P<tspan text-decoration="underline">e</tspan>n color:</text>
  <text x="358.3" y="331">Lase<tspan text-decoration="underline">r</tspan> pointer color:</text>
 </g>
 <!-- color buttons -->
 <g fill="#FDFDFD" stroke="#D0D0D0" stroke-width="1">
  <rect x="447.5" y="295.3" width="31.5" height="18" rx="2"/>
  <rect x="447.5" y="319" width="31.5" height="17.4" rx="2"/>
 </g>
 <g id="bucket">
  <path d="M451.4,303.5 L455.3,298.5 L459.9,301.6 L455.9,306.3 Z" fill="#fff" stroke="#6A6A6A" stroke-width="0.8"/>
  <path d="M454.6,302 V297.6 Q455.5,296.5 456.4,297.6 V300.5" fill="none" stroke="#6A6A6A" stroke-width="0.7"/>
  <path d="M459.6,300.8 Q463.4,302.5 462.3,306.3 Q461.3,304 459.9,303.6 Z" fill="#3F7FCF"/>
  <rect x="449.8" y="306.9" width="13.1" height="3.8" fill="#FF0000"/>
  <path d="M468.3,302.3 L474,302.3 L471.15,305.9 Z" fill="#111"/>
 </g>
 <use href="#bucket" y="23.5"/>
 <!-- show slides -->
 <g>
  <text x="580.6" y="167.6"><tspan text-decoration="underline">A</tspan>ll</text>
  <text x="580.6" y="183"><tspan text-decoration="underline">F</tspan>rom:</text>
  <text x="580.6" y="201.5"><tspan text-decoration="underline">C</tspan>ustom show:</text>
  <text x="676.6" y="183" fill="#6D6D6D"><tspan text-decoration="underline">T</tspan>o:</text>
 </g>
 <g fill="#F0F0F0" stroke="#CCCCCC" stroke-width="1">
  <rect x="621.5" y="174" width="47" height="15"/>
  <rect x="697.5" y="174" width="47" height="15"/>
  <rect x="580.5" y="208" width="164" height="13.3"/>
 </g>
 <g fill="#E8E8E8">
  <rect x="655" y="175" width="13" height="6.4"/><rect x="655" y="182" width="13" height="6.4"/>
  <rect x="731" y="175" width="13" height="6.4"/><rect x="731" y="182" width="13" height="6.4"/>
 </g>
 <rect x="730.5" y="208.5" width="13.5" height="12.3" fill="#FFFFFF"/>
 <g fill="#111"><path d="M659.2,179.8 H664 L661.6,176.8 Z"/><path d="M735.2,179.8 H740 L737.6,176.8 Z"/></g>
 <g fill="#888"><path d="M659.2,183.6 H664 L661.6,186.4 Z"/><path d="M735.2,183.6 H740 L737.6,186.4 Z"/></g>
 <text x="623.8" y="184.8" fill="#8C8C8C">1</text>
 <text x="699.8" y="184.8" fill="#8C8C8C">8</text>
 <text x="583" y="217.8" fill="#8C8C8C">Safety Practices</text>
 <path d="M734.5,213.3 L737.2,216 L739.9,213.3" fill="none" stroke="#777" stroke-width="0.9"/>
 <rect x="555.4" y="136.4" width="199" height="89.8" fill="none" stroke="#E81123" stroke-width="2.4"/>
 <!-- advance -->
 <text x="580.8" y="264.5"><tspan text-decoration="underline">M</tspan>anually</text>
 <text x="580.8" y="280"><tspan text-decoration="underline">U</tspan>sing timings, if present</text>
 <!-- monitors -->
 <text x="565.4" y="323">Slide sh<tspan text-decoration="underline">o</tspan>w monitor:</text>
 <rect x="564.9" y="327.7" width="179.5" height="13.2" fill="#fff" stroke="#A9A9A9" stroke-width="1"/>
 <rect x="566" y="328.8" width="162" height="10.2" fill="#0078D7"/>
 <rect x="566" y="328.8" width="162" height="10.2" fill="none" stroke="#fff" stroke-width="0.6" stroke-dasharray="0.6,0.6" opacity="0.5"/>
 <text x="567.4" y="337.2" fill="#fff">Automatic</text>
 <path d="M733.8,333 L736.5,335.7 L739.2,333" fill="none" stroke="#555" stroke-width="0.9"/>
 <text x="565.4" y="352.8" fill="#8C8C8C">Resolu<tspan text-decoration="underline">t</tspan>ion:</text>
 <rect x="564.9" y="357.4" width="179.5" height="13.3" fill="#F0F0F0" stroke="#CCCCCC" stroke-width="1"/>
 <rect x="730.5" y="358" width="13.5" height="12.3" fill="#fff"/>
 <text x="567.4" y="367.2" fill="#8C8C8C">Use Current Resolution</text>
 <path d="M733.8,362.5 L736.5,365.2 L739.2,362.5" fill="none" stroke="#777" stroke-width="0.9"/>
 <rect x="564.4" y="375" width="10.6" height="9.8" rx="1.5" fill="#0067C0"/>
 <path d="M567,379.8 L569,382 L572.8,377.8" fill="none" stroke="#fff" stroke-width="0.9"/>
 <text x="580.8" y="383">Use Presenter <tspan text-decoration="underline">V</tspan>iew</text>
 <!-- buttons -->
 <rect x="627.8" y="400.1" width="58" height="15.8" rx="2" fill="#FDFDFD" stroke="#0067C0" stroke-width="1"/>
 <rect x="695.7" y="400.1" width="57.7" height="15.8" rx="2" fill="#FDFDFD" stroke="#D0D0D0" stroke-width="1"/>
 <text x="656.8" y="411.3" text-anchor="middle">OK</text>
 <text x="724.5" y="411.3" text-anchor="middle">Cancel</text>
</svg>
</body></html>
